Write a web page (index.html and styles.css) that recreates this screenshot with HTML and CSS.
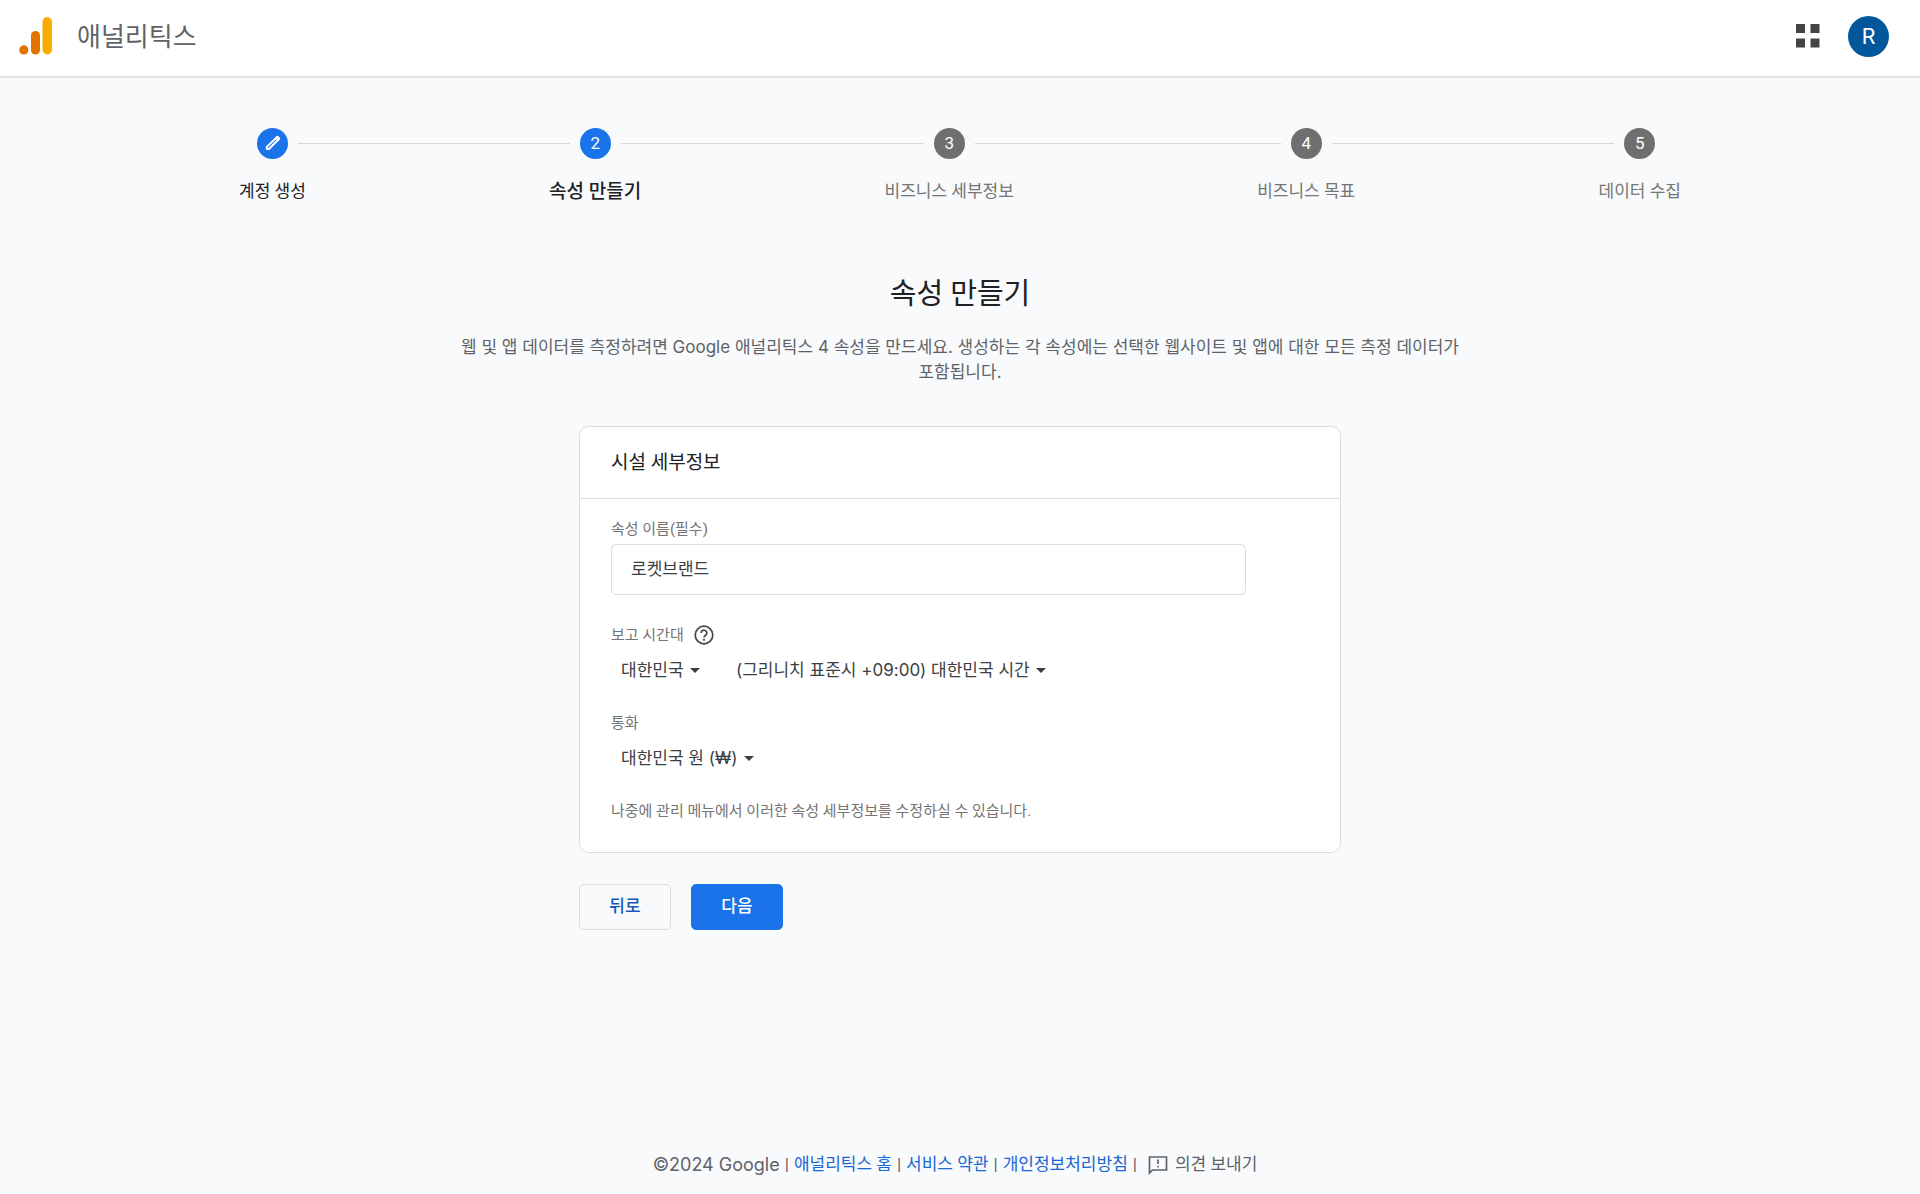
FILE: index.html
```html
<!DOCTYPE html>
<html lang="ko">
<head>
    <meta charset="UTF-8">
    <meta name="viewport" content="width=device-width, initial-scale=1.0">
    <title>애널리틱스</title>
    <link rel="stylesheet" href="styles.css">
</head>
<body>
    <header class="header">
        <div class="brand">
            <svg class="logo" viewBox="0 0 34 38" aria-hidden="true">
                <rect x="23.5" y="0" width="9.5" height="37.5" rx="4.75" fill="#f9ab00"/>
                <rect x="12" y="14" width="9" height="23.5" rx="4.5" fill="#e37400"/>
                <circle cx="4.8" cy="32.9" r="4.6" fill="#e37400"/>
            </svg>
            <span class="brand-name">애널리틱스</span>
        </div>
        <div class="header-actions">
            <button type="button" class="apps" aria-label="앱">
                <svg viewBox="0 0 24 24" aria-hidden="true">
                    <path d="M0 0h9v9H0zM14.500 0h9v9h-9zM0 14.500h9v9H0zM14.500 14.500h9v9h-9z" fill="#444"/>
                </svg>
            </button>
            <button type="button" class="avatar">R</button>
        </div>
    </header>

    <main class="main">
        <!-- Steps -->
        <ol class="stepper">
            <li class="step active">
                <div class="marker">
                    <span class="circle">
                        <svg viewBox="0 0 24 24" aria-hidden="true">
                            <path d="M18 3.600 20.400 6 7.500 19H4.800v-2.700z" fill="none" stroke="#fff" stroke-width="2.400" stroke-linejoin="round"/>
                            <path d="m14.500 5.200 4.300 4.300 2.400-2.400a1.800 1.800 0 0 0 0-2.500l-1.800-1.800a1.800 1.800 0 0 0-2.500 0z" fill="#fff"/>
                        </svg>
                    </span>
                </div>
                <span class="step-label">계정 생성</span>
            </li>
            <li class="connector" aria-hidden="true"></li>
            <li class="step active current">
                <div class="marker"><span class="circle">2</span></div>
                <span class="step-label">속성 만들기</span>
            </li>
            <li class="connector" aria-hidden="true"></li>
            <li class="step">
                <div class="marker"><span class="circle">3</span></div>
                <span class="step-label">비즈니스 세부정보</span>
            </li>
            <li class="connector" aria-hidden="true"></li>
            <li class="step">
                <div class="marker"><span class="circle">4</span></div>
                <span class="step-label">비즈니스 목표</span>
            </li>
            <li class="connector" aria-hidden="true"></li>
            <li class="step">
                <div class="marker"><span class="circle">5</span></div>
                <span class="step-label">데이터 수집</span>
            </li>
        </ol>

        <section class="intro">
            <h1>속성 만들기</h1>
            <p>웹 및 앱 데이터를 측정하려면 Google 애널리틱스 4 속성을 만드세요. 생성하는 각 속성에는 선택한 웹사이트 및 앱에 대한 모든 측정 데이터가 포함됩니다.</p>
        </section>

        <form class="property-form">
            <div class="card">
                <h2>시설 세부정보</h2>
                <div class="card-body">
                    <div class="field">
                        <label for="propertyName">속성 이름(필수)</label>
                        <input type="text" id="propertyName" name="propertyName" value="로켓브랜드" autocomplete="off">
                    </div>

                    <div class="field">
                        <div class="label-row">
                            <label for="country">보고 시간대</label>
                            <button type="button" class="help" aria-label="도움말">
                                <svg viewBox="0 0 20 20" aria-hidden="true">
                                    <circle cx="10" cy="10" r="8.800" fill="none" stroke="#444746" stroke-width="1.700"/>
                                    <path d="M7.200 8a2.800 2.800 0 1 1 4.400 2.200c-1 .7-1.600 1.100-1.600 2.300" fill="none" stroke="#444746" stroke-width="1.700"/>
                                    <circle cx="10" cy="14.800" r="1.100" fill="#444746"/>
                                </svg>
                            </button>
                        </div>
                        <div class="select-row">
                            <div class="select">
                                <select id="country" name="country">
                                    <option>대한민국</option>
                                </select>
                            </div>
                            <div class="select">
                                <select name="timezone" aria-label="시간대">
                                    <option>(그리니치 표준시 +09:00) 대한민국 시간</option>
                                </select>
                            </div>
                        </div>
                    </div>

                    <div class="field">
                        <label for="currency">통화</label>
                        <div class="select-row">
                            <div class="select">
                                <select id="currency" name="currency">
                                    <option>대한민국 원 (₩)</option>
                                </select>
                            </div>
                        </div>
                    </div>

                    <p class="note">나중에 관리 메뉴에서 이러한 속성 세부정보를 수정하실 수 있습니다.</p>
                </div>
            </div>

            <div class="actions">
                <button type="button" class="btn">뒤로</button>
                <button type="submit" class="btn btn-primary">다음</button>
            </div>
        </form>
    </main>

    <footer class="footer">
        <span class="copyright">©2024 Google</span>
        <span>|</span>
        <a href="#">애널리틱스 홈</a>
        <span>|</span>
        <a href="#">서비스 약관</a>
        <span>|</span>
        <a href="#">개인정보처리방침</a>
        <span>|</span>
        <button type="button" class="feedback">
            <svg viewBox="0 0 20 20" aria-hidden="true">
                <path d="M1.500 18V2h17v13h-14z" fill="none" stroke="#5f6368" stroke-width="1.700"/>
                <path d="M9.200 4.500h1.700v4.500H9.200zM9.200 10.800h1.700v1.800H9.200z" fill="#5f6368"/>
            </svg>
            의견 보내기
        </button>
    </footer>
</body>
</html>
```
FILE: styles.css
```css
* {
    margin: 0;
    padding: 0;
    box-sizing: border-box;
}

body {
    min-height: 100vh;
    display: flex;
    flex-direction: column;
    background: #f8fafc;
    color: #202124;
    font-family: Roboto, "Noto Sans CJK KR", sans-serif;
    font-size: 17px;
    line-height: 25px;
    word-break: keep-all;
}

button,
input,
select {
    font: inherit;
    color: inherit;
    background: none;
    border: none;
}

button,
select {
    cursor: pointer;
}

svg {
    display: block;
}

/* Header */
.header {
    display: flex;
    justify-content: space-between;
    align-items: center;
    height: 78px;
    padding: 0 31px 4px 19px;
    background: #fff;
    border-bottom: 2px solid #e0e2e3;
}

.brand {
    display: flex;
    align-items: center;
    gap: 24px;
}

.logo {
    width: 34px;
    height: 38px;
}

.brand-name {
    padding-top: 2px;
    font-size: 26px;
    line-height: 36px;
    color: #5f6368;
}

.header-actions {
    display: flex;
    align-items: center;
    gap: 28px;
}

.apps svg {
    width: 24px;
    height: 24px;
}

.avatar {
    width: 41px;
    height: 41px;
    border-radius: 50%;
    background: #01579b;
    color: #fff;
    font-size: 22px;
}

/* Stepper */
.main {
    padding: 50px 32px 0;
}

.stepper {
    display: flex;
    max-width: 1442px;
    margin: 0 auto;
    list-style: none;
}

.step {
    color: #757575;
    text-align: center;
}

.marker {
    display: flex;
    align-items: center;
    gap: 10px;
    margin-bottom: 20px;
}

.marker::before,
.marker::after {
    content: "";
    flex: 1;
    height: 1px;
    background: #d5d8db;
}

.step:first-child .marker::before,
.step:last-child .marker::after {
    background: none;
}

.circle {
    display: flex;
    justify-content: center;
    align-items: center;
    width: 31px;
    height: 31px;
    border-radius: 50%;
    background: #6f6f6f;
    color: #fff;
}

.circle svg {
    width: 19px;
    height: 19px;
}

.step.active {
    color: #202124;
}

.step.active .circle {
    background: #1a73e8;
}

.step.current .step-label {
    font-size: 19px;
    font-weight: 500;
}

.connector {
    flex: 1;
    height: 1px;
    margin-top: 15px;
    background: #d5d8db;
}

/* Intro */
.intro {
    max-width: 1020px;
    margin: 71px auto 0;
    text-align: center;
}

h1 {
    font-size: 29px;
    font-weight: 400;
    line-height: 36px;
}

.intro p {
    margin-top: 23px;
    color: #5f6368;
    font-family: Inter, "Noto Sans CJK KR", sans-serif;
}

/* Form */
.property-form {
    max-width: 762px;
    margin: 41px auto 0;
}

.card {
    background: #fff;
    border: 1px solid #dadce0;
    border-radius: 10px;
}

h2 {
    padding: 23px 31px;
    border-bottom: 1px solid #dadce0;
    font-size: 19px;
    font-weight: 400;
    line-height: 25px;
}

.card-body {
    padding: 19px 31px 30px;
}

.field {
    margin-bottom: 29px;
}

label {
    display: block;
    color: #757575;
    font-size: 15px;
    line-height: 22px;
}

input {
    display: block;
    width: 91%;
    height: 51px;
    margin-top: 4px;
    padding: 0 19px 4px;
    border: 1px solid #dadce0;
    border-radius: 5px;
    background: #fff;
    color: #3c4043;
}

.label-row {
    display: flex;
    align-items: center;
    gap: 10px;
}

.help svg {
    width: 20px;
    height: 20px;
}

.select-row {
    display: flex;
    gap: 36px;
    margin-top: 12px;
    padding-left: 10px;
    color: #3c4043;
    font-family: Inter, "Noto Sans CJK KR", sans-serif;
}

.select {
    display: flex;
    align-items: center;
    gap: 6px;
}

.select::after {
    content: "";
    border: 5px solid transparent;
    border-top-color: #3c4043;
    border-bottom: none;
}

select {
    appearance: none;
}

.note {
    color: #757575;
    font-size: 15px;
    line-height: 22px;
}

.actions {
    display: flex;
    gap: 20px;
    margin-top: 31px;
}

.btn {
    min-width: 92px;
    height: 46px;
    padding: 0 29px 1px;
    border: 1px solid #dadce0;
    border-radius: 5px;
    color: #185abc;
    font-weight: 500;
}

.btn-primary {
    background: #1a73e8;
    border-color: #1a73e8;
    color: #fff;
}

/* Footer */
.footer {
    display: flex;
    justify-content: center;
    align-items: center;
    gap: 5px;
    margin-top: auto;
    padding: 32px 42px 17px 32px;
    color: #5f6368;
}

.copyright {
    font-family: Inter, sans-serif;
    font-size: 18px;
}

a {
    color: #1967d2;
    text-decoration: none;
}

.feedback {
    display: flex;
    align-items: center;
    gap: 7px;
    margin-left: 6px;
}

.feedback svg {
    width: 20px;
    height: 20px;
}
```
